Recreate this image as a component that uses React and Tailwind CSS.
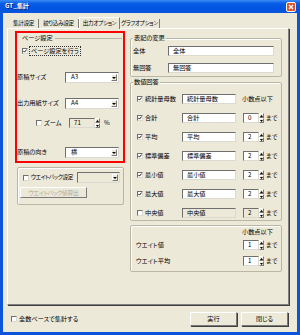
import React from "react";

const sunken =
  "border border-t-[#6f6f6f] border-l-[#6f6f6f] border-b-[#dcdad0] border-r-[#dcdad0]";
const raised =
  "border border-t-white border-l-white border-b-[#7a7a7a] border-r-[#7a7a7a]";
const groupBox =
  "relative rounded-[2px] border border-[#b9b6a6] shadow-[inset_1px_1px_0_#fff]";

const CheckBox = ({ checked }) => (
  <span
    className={`flex h-[6px] w-[6px] shrink-0 items-center justify-center bg-white ${sunken}`}
  >
    {checked && (
      <svg width="4" height="4" viewBox="0 0 4 4">
        <path d="M0.3 1.8 L1.5 3.1 L3.7 0.5" stroke="#000" strokeWidth="0.9" fill="none" />
      </svg>
    )}
  </span>
);

const Arrow = ({ up }) => (
  <svg width="3" height="2" viewBox="0 0 3 2">
    <path d={up ? "M0 2H3L1.5 0Z" : "M0 0H3L1.5 2Z"} fill="#000" />
  </svg>
);

const Select = ({ value, className = "", disabled }) => (
  <div
    className={`flex h-[11px] items-center justify-between ${sunken} ${
      disabled ? "bg-[#ece9d8]" : "bg-white"
    } ${className}`}
  >
    <span className="pl-[5px]">{value}</span>
    <span
      className={`mr-[1px] flex h-[7px] w-[6px] items-center justify-center bg-[#ece9d8] ${raised}`}
    >
      <svg width="4" height="2" viewBox="0 0 4 2">
        <path d="M0 0H4L2 2Z" fill="#000" />
      </svg>
    </span>
  </div>
);

const Spin = ({ value, width = "w-[16px]", disabled }) => (
  <div className="flex h-[10px] items-stretch">
    <div
      className={`flex ${width} items-center ${sunken} ${
        disabled ? "bg-[#ece9d8]" : "bg-white"
      }`}
    >
      <span className="pl-[4px]">{value}</span>
    </div>
    <div className="flex w-[5px] flex-col">
      <span className={`flex flex-1 items-center justify-center bg-[#ece9d8] ${raised}`}>
        <Arrow up />
      </span>
      <span className={`flex flex-1 items-center justify-center bg-[#ece9d8] ${raised}`}>
        <Arrow />
      </span>
    </div>
  </div>
);

const TextBox = ({ value, className = "", disabled }) => (
  <div
    className={`flex h-[10px] items-center ${sunken} ${
      disabled ? "bg-[#ece9d8]" : "bg-white"
    } ${className}`}
  >
    <span className="pl-[4px]">{value}</span>
  </div>
);

const Legend = ({ children }) => (
  <span className="absolute -top-[5px] left-[2px] bg-[#ece9d8] px-[1px] leading-[8px]">
    {children}
  </span>
);

const Tab = ({ width, active, children }) => (
  <div
    className={`flex ${width} items-center justify-center overflow-hidden text-[5.6px] tracking-[-0.3px] ${
      active
        ? "relative z-10 -mb-[1px] h-[12px] border-x border-t border-t-white border-l-white border-r-[#7a7a7a] bg-[#ece9d8]"
        : "h-[9px] border-r border-r-[#7a7a7a]"
    }`}
  >
    {children}
  </div>
);

const statRows = [
  { label: "合計", value: "合計", digits: "0" },
  { label: "平均", value: "平均", digits: "2" },
  { label: "標準偏差", value: "標準偏差", digits: "2" },
  { label: "最小値", value: "最小値", digits: "2" },
  { label: "最大値", value: "最大値", digits: "2" },
];

const StatRow = ({ label, value, digits, checked = true, disabled }) => (
  <div className="mt-[9px] flex h-[10px] items-center">
    <div className="ml-[6px] flex w-[45px] items-center gap-[2px]">
      <CheckBox checked={checked} />
      <span>{label}</span>
    </div>
    <TextBox value={value} className="w-[54px]" disabled={disabled} />
    <div className="ml-[7px]">
      <Spin value={digits} disabled={disabled} />
    </div>
    <span className="ml-[2px]">まで</span>
  </div>
);

export default function App() {
  return (
    <div className="flex h-[335px] w-[300px] flex-col whitespace-nowrap bg-[#0b55da] font-['Noto_Sans_CJK_JP',sans-serif] text-[6.2px] leading-none text-black [font-feature-settings:'palt']">
      {/* title bar */}
      <div className="flex h-[13px] shrink-0 items-center justify-between bg-[linear-gradient(180deg,#3d8cf5_0%,#0a5ee6_25%,#0054e3_60%,#0a56dc_100%)] pl-[5px] pr-[4px]">
        <span className="font-bold text-white [text-shadow:1px_1px_0_#0a1e6e]">GT_集計</span>
        <span className="flex h-[10px] w-[10px] items-center justify-center rounded-[2px] border border-white bg-[#e0522a]">
          <svg width="6" height="6" viewBox="0 0 6 6">
            <path d="M1 1L5 5M5 1L1 5" stroke="#fff" strokeWidth="1.3" />
          </svg>
        </span>
      </div>

      <div className="mx-[3px] mb-[3px] flex flex-1 flex-col bg-[#ece9d8]">
        {/* tabs */}
        <div className="ml-[6px] mt-[4px] flex h-[11px] items-end">
          <Tab width="w-[30px]">集計設定</Tab>
          <Tab width="w-[40px]">絞り込み設定</Tab>
          <Tab width="w-[41px]" active>
            出力オプション
          </Tab>
          <Tab width="w-[40px]">グラフオプション</Tab>
        </div>

        {/* tab panel */}
        <div className="ml-[4px] flex h-[277px] w-[282px] border border-t-white border-l-white border-b-[#808080] border-r-[#808080] pl-[7px] pt-[2px] shadow-[1px_1px_0_#404040]">
          {/* left column */}
          <div className="flex w-[110px] flex-col">
            <div className="flex h-[132px] flex-col border-2 border-[#ff0000]">
              <div className="flex h-[10px] items-center">
                <span className="pl-[5px]">ページ設定</span>
                <span className="ml-[2px] mr-[1px] h-px flex-1 bg-[#b9b6a6]" />
              </div>
              <div className="mt-[3px] flex h-[10px] items-center pl-[5px]">
                <CheckBox checked />
                <span className="ml-[1px] border border-dotted border-[#333] px-[1px] py-[1px]">
                  ページ設定を行う
                </span>
              </div>
              <div className="mt-[16px] flex h-[11px] items-center">
                <span className="w-[48px]">原稿サイズ</span>
                <Select value="A3" className="w-[54px]" />
              </div>
              <div className="mt-[15px] flex h-[11px] items-center">
                <span className="w-[48px]">出力用紙サイズ</span>
                <Select value="A4" className="w-[54px]" />
              </div>
              <div className="mt-[9px] flex h-[10px] items-center">
                <div className="ml-[19px] flex w-[33px] items-center gap-[2px]">
                  <CheckBox />
                  <span>ズーム</span>
                </div>
                <Spin value="71" width="w-[26px]" disabled />
                <span className="ml-[4px]">%</span>
              </div>
              <div className="mt-[19px] flex h-[11px] items-center">
                <span className="w-[48px]">原稿の向き</span>
                <Select value="横" className="w-[54px]" />
              </div>
            </div>

            <div className={`ml-[2px] mt-[4px] flex w-[107px] flex-col pb-[6px] pt-[5px] ${groupBox}`}>
              <div className="flex h-[9px] items-center">
                <div className="ml-[5px] flex w-[54px] items-center gap-[2px]">
                  <CheckBox />
                  <span className="text-[5.6px] tracking-[-0.4px]">ウエイトバック設定</span>
                </div>
                <Select className="h-[9px] w-[43px]" disabled />
              </div>
              <div
                className={`ml-[2px] mt-[5px] flex h-[11px] w-[67px] items-center justify-center text-[5.8px] tracking-[-0.3px] text-[#aca899] ${raised}`}
              >
                ウエイトバック値算出
              </div>
            </div>
          </div>

          {/* right column */}
          <div className="ml-[5px] flex w-[152px] flex-col">
            <div className={`mt-[7px] h-[39px] pb-[3px] pt-[7px] ${groupBox}`}>
              <Legend>表記の変更</Legend>
              <div className="flex h-[10px] items-center">
                <span className="ml-[2px] w-[35px]">全体</span>
                <TextBox value="全体" className="w-[106px]" />
              </div>
              <div className="mt-[7px] flex h-[10px] items-center">
                <span className="ml-[2px] w-[35px]">無回答</span>
                <TextBox value="無回答" className="w-[106px]" />
              </div>
            </div>

            <div className={`mt-[5px] h-[139px] pt-[11px] ${groupBox}`}>
              <Legend>数値回答</Legend>
              <div className="flex h-[10px] items-center">
                <div className="ml-[6px] flex w-[45px] items-center gap-[2px]">
                  <CheckBox checked />
                  <span>統計量母数</span>
                </div>
                <TextBox value="統計量母数" className="w-[54px]" />
                <span className="ml-[6px]">小数点以下</span>
              </div>
              {statRows.map((r) => (
                <StatRow key={r.label} {...r} />
              ))}
              <StatRow label="中央値" value="中央値" digits="2" checked={false} disabled />
            </div>

            <div className={`mt-[4px] h-[47px] pt-[2px] ${groupBox}`}>
              <div className="flex h-[8px] items-center">
                <span className="ml-[111px]">小数点以下</span>
              </div>
              <div className="mt-[4px] flex h-[10px] items-center">
                <span className="ml-[5px] w-[107px]">ウエイト値</span>
                <Spin value="1" />
                <span className="ml-[2px]">まで</span>
              </div>
              <div className="mt-[6px] flex h-[10px] items-center">
                <span className="ml-[5px] w-[107px]">ウエイト平均</span>
                <Spin value="1" />
                <span className="ml-[2px]">まで</span>
              </div>
            </div>
          </div>
        </div>

        {/* footer */}
        <div className="mt-[7px] flex h-[14px] items-center">
          <div className="ml-[8px] flex items-center gap-[2px]">
            <CheckBox />
            <span>全数ベースで集計する</span>
          </div>
          <div className="ml-auto mr-[9px] flex gap-[4px]">
            <button
              className={`flex h-[14px] w-[47px] items-center justify-center bg-[#ece9d8] shadow-[1px_1px_0_#404040] ${raised}`}
            >
              実行
            </button>
            <button
              className={`flex h-[14px] w-[47px] items-center justify-center bg-[#ece9d8] shadow-[1px_1px_0_#404040] ${raised}`}
            >
              閉じる
            </button>
          </div>
        </div>
      </div>
    </div>
  );
}
